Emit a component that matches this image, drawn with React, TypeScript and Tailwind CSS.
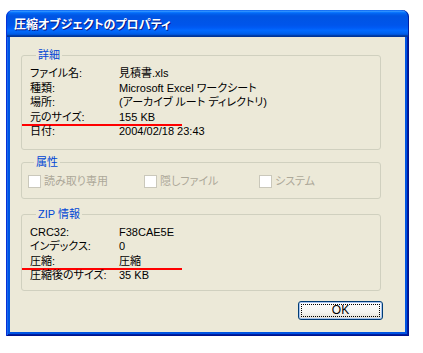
import React from 'react';

type Row = { label: string; value: string; marked?: boolean };

const detailRows: Row[] = [
  { label: 'ファイル名:', value: '見積書.xls' },
  { label: '種類:', value: 'Microsoft Excel ワークシート' },
  { label: '場所:', value: '(アーカイブ ルート ディレクトリ)' },
  { label: '元のサイズ:', value: '155 KB', marked: true },
  { label: '日付:', value: '2004/02/18 23:43' },
];

const zipRows: Row[] = [
  { label: 'CRC32:', value: 'F38CAE5E' },
  { label: 'インデックス:', value: '0' },
  { label: '圧縮:', value: '圧縮', marked: true },
  { label: '圧縮後のサイズ:', value: '35 KB' },
];

const attributes = [
  { label: '読み取り専用', width: 'w-[116px]' },
  { label: '隠しファイル', width: 'w-[115px]' },
  { label: 'システム', width: 'w-[100px]' },
];

const InfoRow: React.FC<{ row: Row }> = ({ row }) => (
  <div className="relative flex h-[14.5px] items-center">
    <span className="w-[89px] shrink-0">{row.label}</span>
    <span>{row.value}</span>
    {row.marked && (
      <span className="absolute -bottom-[2px] -left-[8px] h-[2px] w-[160px] bg-[#ff0000]" />
    )}
  </div>
);

const GroupBox: React.FC<{ title: string; className?: string; children: React.ReactNode }> = ({
  title,
  className = '',
  children,
}) => (
  <fieldset className={`w-[360px] rounded-[3px] border border-[#d0d0bf] ${className}`}>
    <legend className="ml-[6px] px-[2px] text-[11px] leading-[13px] text-[#0046d5]">{title}</legend>
    {children}
  </fieldset>
);

const App: React.FC = () => {
  return (
    <div className="h-[353px] w-[423px] overflow-hidden bg-white pt-[10px] pl-[6px] font-['Liberation_Sans','Noto_Sans_CJK_JP',sans-serif] text-[11px] [font-feature-settings:'palt']">
      <div className="flex h-[326px] w-[403px] flex-col">
        {/* Title bar */}
        <div className="flex h-[27px] shrink-0 items-center rounded-t-[7px] bg-[linear-gradient(to_bottom,#0058ee_0%,#3593ff_4%,#288eff_6%,#127dff_8%,#036ffc_10%,#0262ee_14%,#0057e5_20%,#0054e3_24%,#0055eb_56%,#005bf5_66%,#026afe_76%,#0062ef_86%,#0052d6_92%,#0040ab_94%,#003092_100%)] pt-[2px] pl-[8px] shadow-[inset_1px_0_#0831d9,inset_-1px_0_#001ea0]">
          <span className="text-[12px] font-bold text-white [text-shadow:1px_1px_0_#0a1883]">
            圧縮オブジェクトのプロパティ
          </span>
        </div>

        {/* Frame + client area */}
        <div className="flex flex-1 bg-[#0054e3] px-[4px] pb-[4px] shadow-[inset_1px_0_#0831d9,inset_-1px_0_#00138c,inset_0_-1px_#00138c,inset_2px_0_#166aee,inset_-2px_0_#001ea0,inset_0_-2px_#001ea0]">
          <div className="flex-1 bg-[#ece9d8] pt-[12px] pl-[11px] text-black">
            <GroupBox title="詳細" className="pt-[4px] pb-[10px] pl-[8px]">
              {detailRows.map((r) => (
                <InfoRow key={r.label} row={r} />
              ))}
            </GroupBox>

            <GroupBox title="属性" className="mt-[6px] pt-[5.5px] pb-[9.5px] pl-[6px]">
              <div className="flex h-[14px] items-center text-[#aca899]">
                {attributes.map((a) => (
                  <div key={a.label} className={`flex items-center ${a.width}`}>
                    <span className="mr-[3px] h-[13px] w-[13px] border border-[#cac8bb] bg-white" />
                    <span>{a.label}</span>
                  </div>
                ))}
              </div>
            </GroupBox>

            <GroupBox title="ZIP 情報" className="mt-[9.5px] pt-[3.5px] pb-[7px] pl-[8px]">
              {zipRows.map((r) => (
                <InfoRow key={r.label} row={r} />
              ))}
            </GroupBox>

            <div className="mt-[10px] flex w-[362px] justify-end">
              <button
                type="button"
                className="relative flex h-[19px] w-[85px] items-center justify-center rounded-[3px] border border-[#003c74] bg-[linear-gradient(to_bottom,#ffffff_0%,#f4f4f0_60%,#e3e0d6_100%)] text-[12px] shadow-[inset_0_0_0_1px_#a7c4f0]"
              >
                <span className="absolute inset-[2px] border border-dotted border-black" />
                <span className="relative">OK</span>
              </button>
            </div>
          </div>
        </div>
      </div>
    </div>
  );
};

export default App;
